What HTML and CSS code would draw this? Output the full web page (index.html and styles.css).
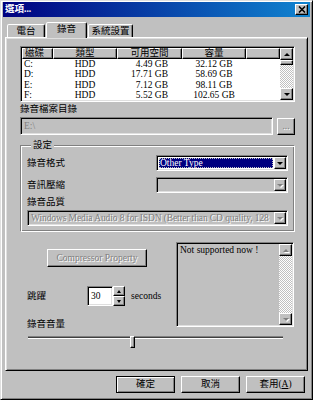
FILE: index.html
```html
<!DOCTYPE html>
<html>
  <head>
    <title>選項...</title>
    <link rel="stylesheet" href="styles.css">
  </head>
  <body>
    <div class="window">
      <div class="titlebar">
        <span class="title">選項...</span>
        <span class="close-btn raised">
          <svg width="8" height="7" viewBox="0 0 8 7"><path d="M1 0.5l6 6M7 0.5l-6 6" stroke="#000" stroke-width="1.6"/></svg>
        </span>
      </div>

      <div class="tabs">
        <div class="tab tab-radio">電台</div>
        <div class="tab tab-active">錄音</div>
        <div class="tab tab-system">系統設置</div>
      </div>

      <div class="panel">
        <div class="listview sunken">
          <div class="list-grid">
            <div class="col-head col-left">磁碟</div>
            <div class="col-head">類型</div>
            <div class="col-head">可用空間</div>
            <div class="col-head">容量</div>
            <div class="col-head"></div>

            <div class="cell col-left">C:</div><div class="cell">HDD</div><div class="cell col-right">4.49 GB</div><div class="cell">32.12 GB</div><div class="cell"></div>
            <div class="cell col-left">D:</div><div class="cell">HDD</div><div class="cell col-right">17.71 GB</div><div class="cell">58.69 GB</div><div class="cell"></div>
            <div class="cell col-left">E:</div><div class="cell">HDD</div><div class="cell col-right">7.12 GB</div><div class="cell">98.11 GB</div><div class="cell"></div>
            <div class="cell col-left">F:</div><div class="cell">HDD</div><div class="cell col-right">5.52 GB</div><div class="cell">102.65 GB</div><div class="cell"></div>
          </div>
          <div class="vscroll">
            <span class="sb-btn raised"><i class="arrow-up"></i></span>
            <span class="sb-thumb raised"></span>
            <span class="sb-track"></span>
            <span class="sb-btn raised"><i class="arrow-down"></i></span>
          </div>
        </div>

        <div class="label">錄音檔案目錄</div>
        <div class="dir-row">
          <div class="edit sunken">E:\</div>
          <span class="btn browse-btn raised disabled-text">...</span>
        </div>

        <div class="group">
          <div class="group-title">設定</div>
          <div class="field">
            <span>錄音格式</span>
            <div class="combo sunken">
              <span class="combo-value selected">Other Type</span>
              <span class="combo-btn raised"><i class="arrow-down"></i></span>
            </div>
          </div>
          <div class="field field-2">
            <span>音訊壓縮</span>
            <div class="combo sunken combo-disabled">
              <span class="combo-value"></span>
              <span class="combo-btn raised"><i class="arrow-down off"></i></span>
            </div>
          </div>
          <div class="group-label">錄音品質</div>
          <div class="combo combo-wide sunken combo-disabled">
            <span class="combo-value quality disabled-text">Windows Media Audio 8 for ISDN (Better than CD quality, 128</span>
            <span class="combo-btn raised"><i class="arrow-down off"></i></span>
          </div>
        </div>

        <div class="lower">
          <div class="lower-left">
            <span class="btn compressor-btn raised disabled-text">Compressor Property</span>
            <div class="skip-row">
              <span class="skip-label">跳躍</span>
              <div class="spinner">
                <div class="spin-edit sunken">30</div>
                <div class="spin-btns">
                  <span class="spin-btn raised"><i class="arrow-up small"></i></span>
                  <span class="spin-btn raised"><i class="arrow-down small"></i></span>
                </div>
              </div>
              <span class="seconds">seconds</span>
            </div>
            <div class="volume-label">錄音音量</div>
          </div>
          <div class="memo sunken">
            <div class="memo-text">Not supported now !</div>
            <div class="vscroll">
              <span class="sb-btn raised"><i class="arrow-up off"></i></span>
              <span class="sb-track"></span>
              <span class="sb-btn raised"><i class="arrow-down off"></i></span>
            </div>
          </div>
        </div>

        <div class="slider">
          <div class="slider-track"></div>
          <span class="slider-thumb raised" style="left: 102px;"></span>
        </div>
      </div>

      <div class="actions">
        <span class="btn action-btn default-btn">確定</span>
        <span class="btn action-btn raised">取消</span>
        <span class="btn action-btn raised">套用(<u>A</u>)</span>
      </div>
    </div>
  </body>
</html>
```

FILE: styles.css
```css
* {
  box-sizing: border-box;
}
body {
  margin: 0;
  background: #c0c0c0;
  color: #000;
  font-family: "Liberation Serif", "Noto Sans CJK TC", serif;
  font-size: 9.5px;
  line-height: 13px;
}
.window {
  width: 313px;
  height: 400px;
  background: #c0c0c0;
  border: 1px solid;
  border-color: #dfdfdf #000 #000 #dfdfdf;
  box-shadow: inset 1px 1px #fff, inset -1px -1px #808080;
  padding: 1px 2px 2px 2px;
}

/* shared bevels */
.raised {
  background: #c0c0c0;
  border: 1px solid;
  border-color: #fff #000 #000 #fff;
  box-shadow: inset -1px -1px #808080;
}
.sunken {
  border: 1px solid;
  border-color: #808080 #fff #fff #808080;
  box-shadow: inset 1px 1px #000, inset -1px -1px #dfdfdf;
  padding: 1px;
}
.disabled-text {
  color: #808080;
  text-shadow: 1px 1px 0 #fff;
}

/* title bar */
.titlebar {
  height: 15px;
  display: flex;
  align-items: center;
  justify-content: space-between;
  padding: 0 2px 0 2px;
  background: linear-gradient(to right, #000080, #1084d0);
  color: #fff;
  font-weight: bold;
}
.close-btn {
  width: 13px;
  height: 11px;
  display: flex;
  align-items: center;
  justify-content: center;
}
.close-btn svg {
  display: block;
}

/* tabs */
.tabs {
  height: 20px;
  display: flex;
  align-items: flex-end;
  padding-left: 4px;
}
.tab {
  height: 13px;
  background: #c0c0c0;
  border: 1px solid;
  border-bottom: none;
  border-color: #fff #000 transparent #fff;
  box-shadow: inset -1px 0 #808080;
  border-radius: 2px 2px 0 0;
  text-align: center;
  line-height: 12px;
}
.tab-radio {
  width: 38px;
}
.tab-active {
  position: relative;
  z-index: 1;
  width: 41px;
  height: 16px;
  margin: 0 0 -1px 1px;
  line-height: 13px;
}
.tab-system {
  width: 45px;
  margin-left: 1px;
}

/* panel */
.panel {
  width: 303px;
  height: 334px;
  margin-left: 2px;
  background: #c0c0c0;
  border: 1px solid;
  border-color: #fff #000 #000 #fff;
  box-shadow: inset 1px 1px #dfdfdf, inset -1px -1px #808080;
  padding: 8px 12px 0 14px;
}

/* list view */
.listview {
  height: 56px;
  display: flex;
  background: #fff;
}
.list-grid {
  flex: 1;
  display: grid;
  grid-template-columns: 31px 64px 65px 64px 1fr;
  grid-template-rows: 11px repeat(4, 10.25px);
  align-content: start;
}
.col-head {
  background: #c0c0c0;
  border: 1px solid;
  border-color: #fff #000 #000 #fff;
  box-shadow: inset -1px -1px #808080;
  text-align: center;
  line-height: 9px;
  white-space: nowrap;
}
.cell {
  text-align: center;
  line-height: 10.25px;
  white-space: nowrap;
}
.col-left {
  text-align: left;
  padding-left: 2px;
}
.col-right {
  text-align: right;
  padding-right: 14px;
}

/* scroll bars */
.vscroll {
  width: 13px;
  display: flex;
  flex-direction: column;
}
.sb-btn {
  height: 12px;
  flex: none;
  display: flex;
  align-items: center;
  justify-content: center;
}
.sb-thumb {
  height: 5px;
  flex: none;
}
.sb-track {
  flex: 1;
  background-color: #fff;
  background-image: repeating-conic-gradient(#c0c0c0 0 25%, #fff 0 50%);
  background-size: 2px 2px;
}
.arrow-up,
.arrow-down {
  width: 0;
  height: 0;
  border-left: 3px solid transparent;
  border-right: 3px solid transparent;
}
.arrow-up {
  border-bottom: 3px solid #000;
}
.arrow-down {
  border-top: 3px solid #000;
}
.arrow-up.small,
.arrow-down.small {
  border-left-width: 2.5px;
  border-right-width: 2.5px;
}
.arrow-up.off {
  border-bottom-color: #808080;
  filter: drop-shadow(1px 1px 0 #fff);
}
.arrow-down.off {
  border-top-color: #808080;
  filter: drop-shadow(1px 1px 0 #fff);
}

/* directory */
.label {
  margin-top: 1px;
}
.dir-row {
  display: flex;
  align-items: flex-end;
  gap: 4px;
  height: 18px;
  margin-top: 1px;
}
.edit {
  flex: 1;
  height: 18px;
  background: #c0c0c0;
  color: #808080;
  padding-left: 3px;
  line-height: 15px;
}
.btn {
  display: flex;
  align-items: center;
  justify-content: center;
  white-space: nowrap;
}
.browse-btn {
  width: 18px;
  height: 17px;
}

/* settings group */
.group {
  margin-top: 10px;
  border: 1px solid;
  border-color: #808080 #fff #fff #808080;
  box-shadow: inset 1px 1px #fff, inset -1px -1px #808080;
  padding: 0 6px 5px 6px;
}
.group-title {
  display: table;
  margin: -7px 0 0 4px;
  padding: 0 2px;
  background: #c0c0c0;
}
.field {
  display: flex;
  align-items: center;
  justify-content: space-between;
  margin-top: 3px;
}
.field-2 {
  margin-top: 6px;
}
.group-label {
  margin-top: 3px;
}
.combo {
  width: 132px;
  height: 16px;
  display: flex;
  background: #fff;
}
.combo-wide {
  width: 100%;
  margin-top: 1px;
}
.combo-disabled {
  background: #c0c0c0;
}
.combo-value {
  flex: 1;
  min-width: 0;
  overflow: hidden;
  white-space: nowrap;
  padding-left: 2px;
  line-height: 12px;
}
.quality {
  letter-spacing: -0.1px;
}
.selected {
  margin: 1px;
  padding-left: 1px;
  background: #000080;
  color: #fff;
  line-height: 10px;
  outline: 1px dotted #c0c0c0;
  outline-offset: -1px;
}
.combo-btn {
  width: 12px;
  flex: none;
  display: flex;
  align-items: center;
  justify-content: center;
}

/* lower area */
.lower {
  display: flex;
  margin-top: 10px;
}
.lower-left {
  width: 156px;
}
.compressor-btn {
  width: 100px;
  height: 18px;
  margin: 7px 0 0 27px;
}
.skip-row {
  display: flex;
  align-items: center;
  height: 20px;
  margin-top: 19px;
}
.skip-label {
  width: 67px;
  padding-left: 7px;
}
.spinner {
  display: flex;
  height: 20px;
}
.spin-edit {
  width: 26px;
  background: #fff;
  padding-left: 3px;
  line-height: 16px;
}
.spin-btns {
  width: 12px;
  display: flex;
  flex-direction: column;
}
.spin-btn {
  height: 10px;
  display: flex;
  align-items: center;
  justify-content: center;
}
.seconds {
  margin-left: 6px;
}
.volume-label {
  margin-top: 12px;
  padding-left: 7px;
}
.memo {
  width: 118px;
  height: 85px;
  display: flex;
  background: #c0c0c0;
}
.memo-text {
  flex: 1;
  padding: 1px 2px;
  line-height: 11px;
}

/* slider */
.slider {
  position: relative;
  width: 255px;
  height: 12px;
  margin: 4px 0 0 8px;
}
.slider-track {
  height: 3px;
  margin-top: 5px;
  border-top: 1px solid #808080;
  border-bottom: 1px solid #fff;
  background: #404040;
}
.slider-thumb {
  position: absolute;
  top: 0;
  width: 5px;
  height: 12px;
}

/* dialog buttons */
.actions {
  display: flex;
  justify-content: flex-end;
  gap: 6px;
  margin-top: 5px;
  padding-right: 5px;
}
.action-btn {
  width: 59px;
  height: 17px;
}
.default-btn {
  background: #c0c0c0;
  border: 1px solid #000;
  box-shadow: inset 1px 1px #fff, inset -1px -1px #808080;
}
```
